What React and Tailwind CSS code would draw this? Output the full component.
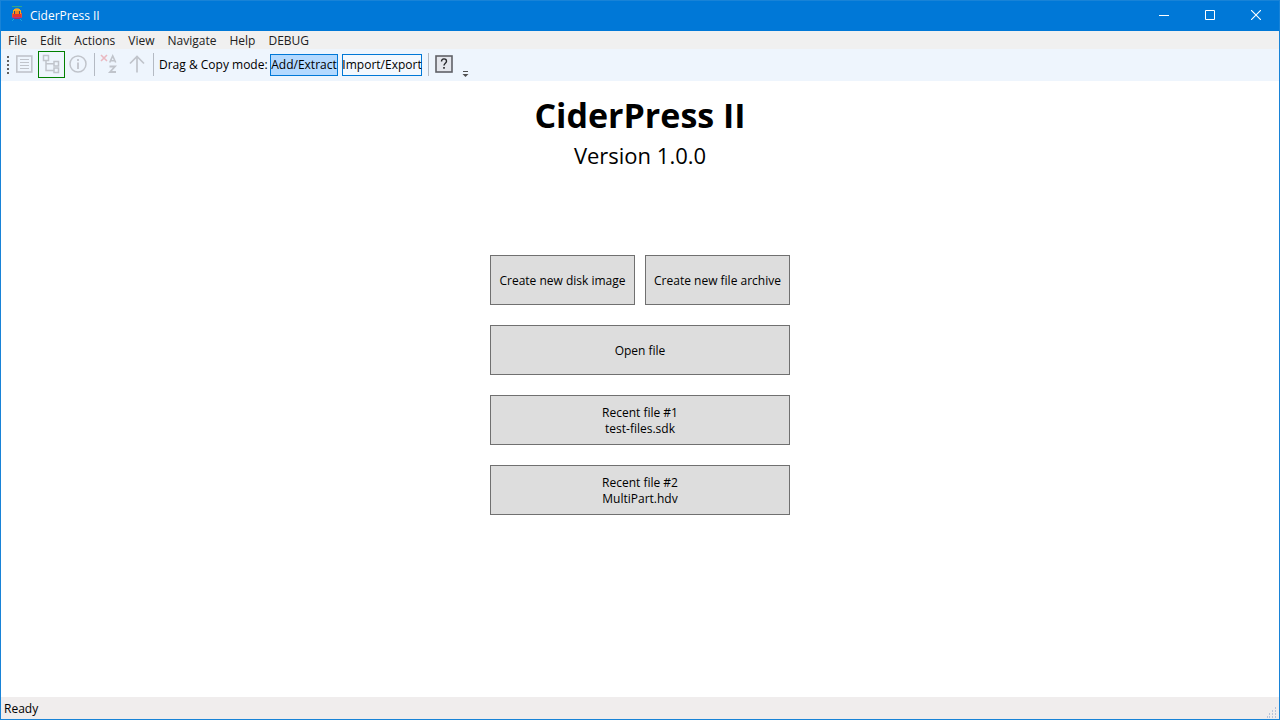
import React from "react";

const menus = ["File", "Edit", "Actions", "View", "Navigate", "Help", "DEBUG"];

function AppIcon() {
  return (
    <svg className="h-4 w-4" viewBox="0 0 16 16" aria-hidden="true">
      <path d="M3 0.500h10" stroke="#2fa58c" />
      <path d="M6.500 3V2.500h3V3" fill="none" stroke="#8fa06a" />
      <path d="M5 3h6v1h1v4H4V4h1z" fill="#f6a623" />
      <path d="M5 5h6v3H5z" fill="#35506f" />
      <path d="M6 5h4v3H6z" fill="#f58220" />
      <path d="M3 7h1v4H3zM12 7h1v4h-1z" fill="#d8563f" />
      <path d="M4 8h8v3H4z" fill="#e8352c" />
      <path d="M3 11h10v1H3z" fill="#b23a83" />
      <path d="M5 12h6v1H5z" fill="#a32d6b" />
      <path d="M5 13l-2 2M11 13l2 2" stroke="#1aa0dc" />
    </svg>
  );
}

function ListIcon() {
  return (
    <svg className="h-[18px] w-[18px]" viewBox="0 0 18 18" fill="none" stroke="#c0c4cb" aria-hidden="true">
      <rect x="1.800" y="1" width="15" height="16" strokeWidth="1.600" />
      <path d="M5 4.500h9M5 7.500h9M5 10.500h9M5 13.500h9" strokeWidth="1.200" />
    </svg>
  );
}

function TreeIcon() {
  return (
    <svg className="h-5 w-5" viewBox="0 0 20 20" fill="none" stroke="#c0c4cb" strokeWidth="1.500" aria-hidden="true">
      <rect x="2.500" y="1.500" width="5" height="5" />
      <rect x="13" y="7.500" width="4.500" height="4.500" />
      <rect x="13" y="14" width="4.500" height="4.500" />
      <path d="M5 6.500v10h8M5 9.700h8" />
    </svg>
  );
}

function InfoIcon() {
  return (
    <svg className="h-[18px] w-[18px]" viewBox="0 0 18 18" fill="none" stroke="#c0c4cb" aria-hidden="true">
      <circle cx="9" cy="9" r="8" strokeWidth="1.500" />
      <path d="M9 7.500V14M9 4v2" strokeWidth="1.800" />
    </svg>
  );
}

function SortIcon() {
  return (
    <svg className="h-5 w-[18px]" viewBox="0 0 18 20" fill="none" stroke="#c0c4cb" aria-hidden="true">
      <path d="M1 1l6 6M7 1L1 7" stroke="#eab9c2" strokeWidth="1.600" />
      <path d="M9.700 8.500L12.700 2L15.700 8.500M10.700 6.700h4" strokeWidth="1.600" />
      <path d="M9.500 12.500h5.500L10 18h6" strokeWidth="1.800" />
    </svg>
  );
}

function UpIcon() {
  return (
    <svg className="h-[18px] w-[18px]" viewBox="0 0 18 18" fill="none" stroke="#c0c4cb" strokeWidth="1.700" aria-hidden="true">
      <path d="M9 17.500V1.500M2 8.500L9 1.500l7 7" />
    </svg>
  );
}

function HelpIcon() {
  return (
    <svg className="h-[18px] w-[18px]" viewBox="0 0 18 18" aria-hidden="true">
      <rect x="1" y="1" width="16" height="16" fill="#e4e6ec" stroke="#606167" strokeWidth="1.600" />
      <path d="M6.500 6.500C6.500 3 11.500 3 11.500 6.200C11.500 8.200 9 8.200 9 10.500" fill="none" stroke="#26272b" strokeWidth="1.400" />
      <path d="M8.200 12h1.600v1.700H8.200z" fill="#26272b" />
    </svg>
  );
}

function ToolButton({ label, active, children }) {
  return (
    <button
      type="button"
      aria-label={label}
      className={
        active
          ? "flex h-[27px] w-[27px] items-center justify-center border border-[#008000] pr-px pb-px"
          : "flex h-[27px] w-[27px] items-center justify-center border border-transparent pr-px pb-px"
      }
    >
      {children}
    </button>
  );
}

function Separator() {
  return <span className="h-[23px] w-px bg-[#b4bac3]" />;
}

function WindowButton({ label, children }) {
  return (
    <button type="button" aria-label={label} className="flex h-[30px] w-[46px] items-center justify-center pb-0.5">
      <svg className="h-2.5 w-2.5" viewBox="0 0 10 10" fill="none" stroke="#ffffff" aria-hidden="true">
        {children}
      </svg>
    </button>
  );
}

function LaunchButton({ lines }) {
  return (
    <button
      type="button"
      className="flex h-[50px] flex-1 flex-col items-center justify-center border border-[#707070] bg-[#dddddd] pt-0.5"
    >
      {lines.map((line) => (
        <span key={line}>{line}</span>
      ))}
    </button>
  );
}

export default function App() {
  return (
    <div className="flex min-h-screen flex-col border border-[#1883d7] bg-white font-['Open_Sans','Noto_Sans',sans-serif] text-[12px] leading-4 text-black">
      <header className="flex h-[30px] items-center bg-[#0078d7] pl-2 text-white">
        <span className="pb-1">
          <AppIcon />
        </span>
        <span className="ml-[5px]">CiderPress II</span>
        <div className="ml-auto flex">
          <WindowButton label="Minimize">
            <path d="M0 5.500h10" />
          </WindowButton>
          <WindowButton label="Maximize">
            <path d="M0.500 0.500h9v9h-9z" />
          </WindowButton>
          <WindowButton label="Close">
            <path d="M0 0l10 10M10 0L0 10" strokeWidth="1.100" />
          </WindowButton>
        </div>
      </header>

      <nav className="flex h-[18px] items-end gap-[13px] bg-[#f0f0f0] px-[7px] text-[#212121]">
        {menus.map((name) => (
          <button key={name} type="button">
            {name}
          </button>
        ))}
      </nav>

      <div className="flex h-8 items-start bg-[#eef5fd] pt-0.5 pl-[5px]">
        <div className="flex h-[27px] items-center">
          <svg className="h-[18px] w-1" viewBox="0 0 4 18" aria-hidden="true">
            <path d="M2 0v18" stroke="#606060" strokeWidth="2" strokeDasharray="2 2" />
          </svg>
          <div className="flex pl-px">
            <ToolButton label="File list">
              <ListIcon />
            </ToolButton>
            <ToolButton label="Directory tree" active>
              <TreeIcon />
            </ToolButton>
            <ToolButton label="Information">
              <InfoIcon />
            </ToolButton>
          </div>
          <span className="w-0.5" />
          <Separator />
          <div className="flex gap-px px-px">
            <ToolButton label="Reset sort">
              <SortIcon />
            </ToolButton>
            <ToolButton label="Up to parent">
              <UpIcon />
            </ToolButton>
          </div>
          <span className="w-px" />
          <Separator />
          <span className="w-[116px] pl-[5px] whitespace-nowrap">Drag &amp; Copy mode:</span>
          <div className="flex gap-1">
            <button
              type="button"
              className="flex h-[22px] w-[68px] items-center justify-center border border-[#0078d7] bg-[#b3d9ff] whitespace-nowrap"
            >
              Add/Extract
            </button>
            <button
              type="button"
              className="flex h-[22px] w-20 items-center justify-center border border-[#0078d7] bg-[#f3f8fe] whitespace-nowrap"
            >
              Import/Export
            </button>
          </div>
          <span className="w-1.5" />
          <Separator />
          <div className="flex pl-0.5">
            <ToolButton label="Help">
              <HelpIcon />
            </ToolButton>
          </div>
        </div>
        <button type="button" aria-label="Toolbar options" className="ml-px flex h-[27px] w-3 items-end justify-center pb-px">
          <svg className="h-[7px] w-[7px]" viewBox="0 0 7 7" aria-hidden="true">
            <path d="M1 1.500h5" stroke="#505050" />
            <path d="M0.500 4h6l-3 3z" fill="#505050" />
          </svg>
        </button>
      </div>

      <main className="flex flex-1 flex-col items-center px-4 pt-2.5">
        <h1 className="text-[34px] leading-[48px] font-bold">CiderPress II</h1>
        <p className="text-[22px] leading-8">Version 1.0.0</p>
        <div className="mt-21 flex w-[300px] flex-col gap-5">
          <div className="flex gap-2.5">
            <LaunchButton lines={["Create new disk image"]} />
            <LaunchButton lines={["Create new file archive"]} />
          </div>
          <div className="flex">
            <LaunchButton lines={["Open file"]} />
          </div>
          <div className="flex">
            <LaunchButton lines={["Recent file #1", "test-files.sdk"]} />
          </div>
          <div className="flex">
            <LaunchButton lines={["Recent file #2", "MultiPart.hdv"]} />
          </div>
        </div>
      </main>

      <footer className="flex h-[22px] items-center justify-between bg-[#f0eded] pt-0.5 pl-[3px]">
        <span>Ready</span>
        <svg className="h-3 w-3 self-end" viewBox="0 0 12 12" fill="#b8c4da" aria-hidden="true">
          <path d="M8 0h1v2H8zM5 3h1v2H5zM8 3h1v2H8zM2 6h1v2H2zM5 6h1v2H5zM8 6h1v2H8zM0 9h1v2H0zM2 9h1v2H2zM5 9h1v2H5zM8 9h1v2H8z" />
        </svg>
      </footer>
    </div>
  );
}
